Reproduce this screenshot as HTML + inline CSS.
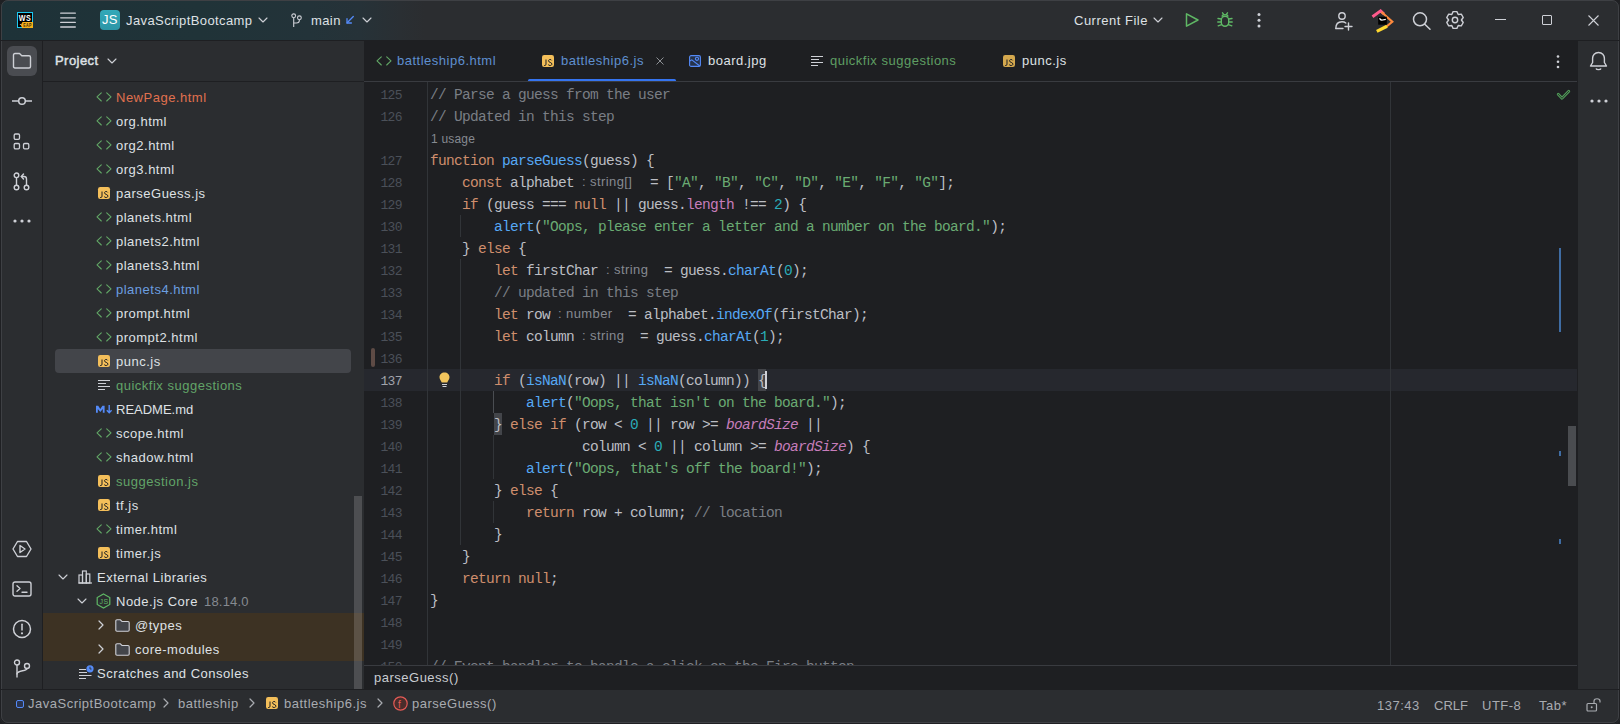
<!DOCTYPE html><html><head><meta charset="utf-8"><style>
*{margin:0;padding:0;box-sizing:border-box}
html,body{width:1620px;height:724px;overflow:hidden;background:#1F2023}
body{font-family:"Liberation Sans",sans-serif;font-size:13px;color:#DFE1E5;position:relative;letter-spacing:0.5px}
.a{position:absolute}
svg{position:absolute;overflow:visible}
#win{position:absolute;left:0;top:0;width:1620px;height:724px;background:#2B2D30;overflow:hidden;border-radius:7px;}
#frame{position:absolute;left:1px;top:0;width:1618px;height:723px;border:1px solid #3E4044;border-radius:7px;pointer-events:none;box-shadow:0 0 0 1px #1F2023}
#title{left:0;top:0;width:1620px;height:40px;background:linear-gradient(90deg,#1E3238 0px,#203338 200px,#233339 310px,#263238 360px,#2A2F33 400px,#2B2D30 425px)}
#lstrip{left:0;top:40px;width:43px;height:650px;background:#2B2D30;border-right:1px solid #1E1F22}
#proj{left:43px;top:40px;width:321px;height:650px;background:#2B2D30;overflow:hidden}
#editor{left:364px;top:40px;width:1213px;height:650px;background:#1E1F22;overflow:hidden}
#rstrip{left:1577px;top:40px;width:43px;height:650px;background:#2B2D30;border-left:1px solid #1E1F22}
#status{left:0;top:690px;width:1620px;height:34px;background:#2B2D30}
.t{position:absolute;white-space:nowrap;line-height:16px}
.code{position:absolute;font-family:"Liberation Mono",monospace;font-size:14.5px;white-space:pre;line-height:22px;color:#BCBEC4;letter-spacing:-0.7px}
.ln{position:absolute;left:0;width:37px;text-align:right;font-family:"Liberation Mono",monospace;font-size:12.5px;color:#4B5059;line-height:22px;letter-spacing:0}
.kw{color:#CF8E6D}.str{color:#6AAB73}.num{color:#2AACB8}.fn{color:#56A8F5}.cm{color:#7A7E85}.prop{color:#C77DBB}.gl{color:#C77DBB;font-style:italic}
.hint{display:inline-block;position:relative;height:16px;vertical-align:top;}
.hint span{position:absolute;left:8px;top:-1px;font-family:"Liberation Sans",sans-serif;font-size:13px;color:#868A91;letter-spacing:0.4px}
</style></head><body><div id="win">
<div class="a" id="title">
<svg style="left:16px;top:11px" width="18" height="18" viewBox="0 0 18 18">
<rect x="1.5" y="1.5" width="15" height="15" fill="#000" stroke="#1CC8F0" stroke-width="1"/>
<text x="2.7" y="9.8" font-family="Liberation Sans" font-weight="bold" font-size="8.6" fill="#fff" textLength="12.4" lengthAdjust="spacingAndGlyphs">WS</text>
<path d="M6.5 11 H17 V17 H6.2 L4.8 14 Z" fill="#F5B01A"/>
<circle cx="4.3" cy="13.6" r="0.5" fill="#fff"/>
<text x="7.3" y="15.8" font-family="Liberation Sans" font-weight="bold" font-size="5" fill="#3a2a10" textLength="8.5" lengthAdjust="spacingAndGlyphs">EAP</text>
</svg>
<svg style="left:60px;top:12px" width="16" height="16" viewBox="0 0 16 16">
<g stroke="#CED0D6" stroke-width="1.3" stroke-linecap="round"><line x1="0.7" y1="1.2" x2="15.3" y2="1.2"/><line x1="0.7" y1="5.8" x2="15.3" y2="5.8"/><line x1="0.7" y1="10.4" x2="15.3" y2="10.4"/><line x1="0.7" y1="15" x2="15.3" y2="15"/></g></svg>
<div class="a" style="left:100px;top:10px;width:20px;height:20px;border-radius:4px;background:linear-gradient(#33A9B9,#2B95A6)"></div>
<div class="t" style="left:102px;top:12px;font-size:13px;color:#fff;letter-spacing:0.2px">JS</div>
<div class="t" style="left:126px;top:13px;letter-spacing:0.4px">JavaScriptBootcamp</div>
<svg style="left:258px;top:17px" width="10" height="6" viewBox="0 0 10 6"><path d="M1 1 L5 5 L9 1" fill="none" stroke="#CED0D6" stroke-width="1.1" stroke-linecap="round" stroke-linejoin="round"/></svg>
<svg style="left:289px;top:13px" width="14" height="15" viewBox="0 0 14 15">
<g fill="none" stroke="#CED0D6" stroke-width="1.1"><circle cx="4.7" cy="2.8" r="1.9"/><circle cx="10.4" cy="4.8" r="1.9"/><path d="M4.7 4.7 V14"/><path d="M10.4 6.7 Q10.4 10 7.5 10 H4.7"/></g></svg>
<div class="t" style="left:311px;top:13px;letter-spacing:0.4px">main</div>
<svg style="left:345px;top:15px" width="10" height="10" viewBox="0 0 10 10"><g fill="none" stroke="#548AF7" stroke-width="1.3" stroke-linecap="round"><path d="M8.3 1.5 L2.2 7.8"/><path d="M2 3.6 V8 H6.4"/></g></svg>
<svg style="left:362px;top:17px" width="10" height="6" viewBox="0 0 10 6"><path d="M1 1 L5 5 L9 1" fill="none" stroke="#CED0D6" stroke-width="1.1" stroke-linecap="round" stroke-linejoin="round"/></svg>
<div class="t" style="left:1074px;top:13px;letter-spacing:0.5px">Current File</div>
<svg style="left:1153px;top:17px" width="10" height="6" viewBox="0 0 10 6"><path d="M1 1 L5 5 L9 1" fill="none" stroke="#CED0D6" stroke-width="1.1" stroke-linecap="round" stroke-linejoin="round"/></svg>
<svg style="left:1184px;top:12px" width="16" height="16" viewBox="0 0 16 16"><path d="M2.5 1.8 L14 8 L2.5 14.2 Z" fill="none" stroke="#5FB865" stroke-width="1.5" stroke-linejoin="round"/></svg>
<svg style="left:1217px;top:12px" width="16" height="16" viewBox="0 0 16 16"><g fill="none" stroke="#5FB865" stroke-width="1.4" stroke-linecap="round">
<path d="M5.2 4.3 C5.2 2 10.8 2 10.8 4.3"/><path d="M6.5 2.2 L5.5 0.8 M9.5 2.2 L10.5 0.8"/>
<rect x="4.3" y="4.3" width="7.4" height="10" rx="3.7"/><path d="M1 6.5 L4.3 7 M15 6.5 L11.7 7 M0.8 10 H4.3 M15.2 10 H11.7 M1.2 13.8 L4.6 12.6 M14.8 13.8 L11.4 12.6"/></g></svg>
<svg style="left:1257px;top:12px" width="4" height="16" viewBox="0 0 4 16"><g fill="#CED0D6"><circle cx="2" cy="2.5" r="1.5"/><circle cx="2" cy="8.3" r="1.5"/><circle cx="2" cy="14" r="1.5"/></g></svg>
<svg style="left:1334px;top:11px" width="20" height="20" viewBox="0 0 20 20"><g fill="none" stroke="#CED0D6" stroke-width="1.4" stroke-linecap="round">
<circle cx="8" cy="5" r="3.2"/><path d="M1.8 17.5 C1.8 12.5 5 10.8 8 10.8 C9.5 10.8 10.8 11.2 11.8 12"/><path d="M2 17.5 H9"/><path d="M14.5 12 V19 M11 15.5 H18"/></g></svg>
<svg style="left:1366px;top:5px" width="34" height="32" viewBox="0 0 34 32">
<path d="M6.5 11.8 L14.6 5.9 L18 9" fill="none" stroke="#FF5A8C" stroke-width="3" stroke-linejoin="miter"/>
<path d="M15.5 7 L26.3 16.8 L20 22" fill="none" stroke="#FF8A3D" stroke-width="2.2" stroke-linejoin="miter"/>
<path d="M21 21.2 L10.8 26.4" fill="none" stroke="#FFD82E" stroke-width="3.2"/>
<rect x="12.2" y="11.7" width="8.6" height="8" fill="#000"/>
<path d="M13.6 13.3 Q14.3 15.4 16.6 15 L19.8 14.3" fill="none" stroke="#fff" stroke-width="1.2"/>
</svg>
<svg style="left:1412px;top:11px" width="20" height="20" viewBox="0 0 20 20"><g fill="none" stroke="#CED0D6" stroke-width="1.5" stroke-linecap="round"><circle cx="8" cy="8.3" r="6.5"/><path d="M12.8 13.2 L18 18.3"/></g></svg>
<svg style="left:1445px;top:10px" width="20" height="20" viewBox="0 0 20 20"><g fill="none" stroke="#CED0D6" stroke-width="1.4" stroke-linejoin="round"><path d="M6.80 4.46 L8.07 1.62 L11.93 1.62 L13.20 4.46 L16.29 4.13 L18.22 7.49 L16.40 10.00 L18.22 12.51 L16.29 15.87 L13.20 15.54 L11.93 18.38 L8.07 18.38 L6.80 15.54 L3.71 15.87 L1.78 12.51 L3.60 10.00 L1.78 7.49 L3.71 4.13Z"/><circle cx="10" cy="10" r="2.7"/></g></svg>
<div class="a" style="left:1495px;top:19px;width:11px;height:1px;background:#CED0D6"></div>
<div class="a" style="left:1542px;top:15px;width:10px;height:10px;border:1px solid #CED0D6;border-radius:1px"></div>
<svg style="left:1588px;top:15px" width="11" height="11" viewBox="0 0 11 11"><g stroke="#CED0D6" stroke-width="1.1"><path d="M0.5 0.5 L10.5 10.5 M10.5 0.5 L0.5 10.5"/></g></svg>
</div>
<div class="a" style="left:0;top:40px;width:1620px;height:1px;background:#1E1F22;z-index:2"></div>
<div class="a" id="lstrip">
<div class="a" style="left:7px;top:6px;width:30px;height:30px;border-radius:6px;background:#4A4C51"></div>
<svg style="left:12px;top:12px" width="20" height="18" viewBox="0 0 20 18"><path d="M1.5 3 Q1.5 1.5 3 1.5 H7.5 L9.8 3.8 H17 Q18.5 3.8 18.5 5.3 V14.5 Q18.5 16 17 16 H3 Q1.5 16 1.5 14.5 Z" fill="none" stroke="#CED0D6" stroke-width="1.4" stroke-linejoin="round"/></svg>
<svg style="left:11px;top:54px" width="22" height="14" viewBox="0 0 22 14"><g fill="none" stroke="#CED0D6" stroke-width="1.5"><circle cx="11" cy="7" r="3.3"/><path d="M1 7 H7.7 M14.3 7 H21"/></g></svg>
<svg style="left:13px;top:93px" width="18" height="18" viewBox="0 0 18 18"><g fill="none" stroke="#CED0D6" stroke-width="1.3"><rect x="1.2" y="1" width="5.3" height="5.3" rx="1.2"/><rect x="1.2" y="10.5" width="5.3" height="5.3" rx="1.2"/><rect x="10.5" y="10.5" width="5.3" height="5.3" rx="1.2"/></g></svg>
<svg style="left:13px;top:132px" width="18" height="19" viewBox="0 0 18 19"><g fill="none" stroke="#CED0D6" stroke-width="1.4" stroke-linecap="round"><circle cx="3.5" cy="3.3" r="2.3"/><circle cx="3.5" cy="15.5" r="2.3"/><circle cx="13.5" cy="15.5" r="2.3"/><path d="M3.5 5.6 V13.2"/><path d="M13.5 13.2 V7 Q13.5 4.5 11 4.5 H8.5"/><path d="M10.5 2 L8.3 4.5 L10.5 7"/></g></svg>
<svg style="left:13px;top:179px" width="18" height="4" viewBox="0 0 18 4"><g fill="#CED0D6"><circle cx="2" cy="2" r="1.6"/><circle cx="9" cy="2" r="1.6"/><circle cx="16" cy="2" r="1.6"/></g></svg>
<svg style="left:12px;top:500px" width="20" height="18" viewBox="0 0 20 18"><g fill="none" stroke="#CED0D6" stroke-width="1.4" stroke-linejoin="round"><path d="M5.5 1.5 H14.5 L19 9 L14.5 16.5 H5.5 L1 9 Z"/><path d="M8 5.5 L13 9 L8 12.5 Z"/></g></svg>
<svg style="left:12px;top:541px" width="20" height="16" viewBox="0 0 20 16"><g fill="none" stroke="#CED0D6" stroke-width="1.4" stroke-linecap="round" stroke-linejoin="round"><rect x="1" y="1" width="18" height="14" rx="2"/><path d="M5 4.8 L8 7.5 L5 10.2"/><path d="M10 11.2 H15"/></g></svg>
<svg style="left:12px;top:579px" width="20" height="20" viewBox="0 0 20 20"><g fill="none" stroke="#CED0D6" stroke-width="1.5" stroke-linecap="round"><circle cx="10" cy="10" r="8.5"/><path d="M10 5.3 V11"/></g><circle cx="10" cy="14.3" r="1.1" fill="#CED0D6"/></svg>
<svg style="left:13px;top:619px" width="18" height="19" viewBox="0 0 18 19"><g fill="none" stroke="#CED0D6" stroke-width="1.4" stroke-linecap="round"><circle cx="4" cy="3.5" r="2.5"/><circle cx="14" cy="7" r="2.5"/><path d="M4 6 V18"/><path d="M4 15 C4 11 14 12.5 14 9.5"/></g></svg>
</div>
<div class="a" id="proj">
<div class="t" style="left:12px;top:13px;letter-spacing:0.45px;-webkit-text-stroke:0.45px #DFE1E5">Project</div>
<svg style="left:64px;top:18px" width="10" height="6" viewBox="0 0 10 6"><path d="M1 1 L5 5 L9 1" fill="none" stroke="#CED0D6" stroke-width="1.1" stroke-linecap="round" stroke-linejoin="round"/></svg>
<div class="a" style="left:0;top:41px;width:321px;height:1px;background:#1E1F22"></div>
<svg style="left:53px;top:52px" width="16" height="10" viewBox="0 0 16 10"><path d="M5.3 0.8 L1 4.9 L5.3 9 M10.7 0.8 L15 4.9 L10.7 9" fill="none" stroke="#62A766" stroke-width="1.1" stroke-linejoin="round" stroke-linecap="round"/></svg>
<div class="t" style="left:73px;top:50px;color:#E0714F;">NewPage.html</div>
<svg style="left:53px;top:76px" width="16" height="10" viewBox="0 0 16 10"><path d="M5.3 0.8 L1 4.9 L5.3 9 M10.7 0.8 L15 4.9 L10.7 9" fill="none" stroke="#62A766" stroke-width="1.1" stroke-linejoin="round" stroke-linecap="round"/></svg>
<div class="t" style="left:73px;top:74px;">org.html</div>
<svg style="left:53px;top:100px" width="16" height="10" viewBox="0 0 16 10"><path d="M5.3 0.8 L1 4.9 L5.3 9 M10.7 0.8 L15 4.9 L10.7 9" fill="none" stroke="#62A766" stroke-width="1.1" stroke-linejoin="round" stroke-linecap="round"/></svg>
<div class="t" style="left:73px;top:98px;">org2.html</div>
<svg style="left:53px;top:124px" width="16" height="10" viewBox="0 0 16 10"><path d="M5.3 0.8 L1 4.9 L5.3 9 M10.7 0.8 L15 4.9 L10.7 9" fill="none" stroke="#62A766" stroke-width="1.1" stroke-linejoin="round" stroke-linecap="round"/></svg>
<div class="t" style="left:73px;top:122px;">org3.html</div>
<svg style="left:55px;top:147px" width="12" height="12" viewBox="0 0 12 12"><rect x="0" y="0" width="12" height="12" rx="2.2" fill="#F4BF5A"/><g fill="none" stroke="#1E1F22" stroke-width="1" transform="translate(0.1 0.5)"><path d="M3.9 4 V8.7 Q3.9 10 2.7 10 H1.9"/><path d="M9.6 4.9 C9.3 4.3 8.7 4 8 4 C7 4 6.4 4.6 6.4 5.4 C6.4 7.1 9.8 6.6 9.8 8.5 C9.8 9.5 9 10 8 10 C7.2 10 6.5 9.7 6.1 9.1"/></g></svg>
<div class="t" style="left:73px;top:146px;">parseGuess.js</div>
<svg style="left:53px;top:172px" width="16" height="10" viewBox="0 0 16 10"><path d="M5.3 0.8 L1 4.9 L5.3 9 M10.7 0.8 L15 4.9 L10.7 9" fill="none" stroke="#62A766" stroke-width="1.1" stroke-linejoin="round" stroke-linecap="round"/></svg>
<div class="t" style="left:73px;top:170px;">planets.html</div>
<svg style="left:53px;top:196px" width="16" height="10" viewBox="0 0 16 10"><path d="M5.3 0.8 L1 4.9 L5.3 9 M10.7 0.8 L15 4.9 L10.7 9" fill="none" stroke="#62A766" stroke-width="1.1" stroke-linejoin="round" stroke-linecap="round"/></svg>
<div class="t" style="left:73px;top:194px;">planets2.html</div>
<svg style="left:53px;top:220px" width="16" height="10" viewBox="0 0 16 10"><path d="M5.3 0.8 L1 4.9 L5.3 9 M10.7 0.8 L15 4.9 L10.7 9" fill="none" stroke="#62A766" stroke-width="1.1" stroke-linejoin="round" stroke-linecap="round"/></svg>
<div class="t" style="left:73px;top:218px;">planets3.html</div>
<svg style="left:53px;top:244px" width="16" height="10" viewBox="0 0 16 10"><path d="M5.3 0.8 L1 4.9 L5.3 9 M10.7 0.8 L15 4.9 L10.7 9" fill="none" stroke="#62A766" stroke-width="1.1" stroke-linejoin="round" stroke-linecap="round"/></svg>
<div class="t" style="left:73px;top:242px;color:#6C9FE0;">planets4.html</div>
<svg style="left:53px;top:268px" width="16" height="10" viewBox="0 0 16 10"><path d="M5.3 0.8 L1 4.9 L5.3 9 M10.7 0.8 L15 4.9 L10.7 9" fill="none" stroke="#62A766" stroke-width="1.1" stroke-linejoin="round" stroke-linecap="round"/></svg>
<div class="t" style="left:73px;top:266px;">prompt.html</div>
<svg style="left:53px;top:292px" width="16" height="10" viewBox="0 0 16 10"><path d="M5.3 0.8 L1 4.9 L5.3 9 M10.7 0.8 L15 4.9 L10.7 9" fill="none" stroke="#62A766" stroke-width="1.1" stroke-linejoin="round" stroke-linecap="round"/></svg>
<div class="t" style="left:73px;top:290px;">prompt2.html</div>
<div class="a" style="left:12px;top:309px;width:296px;height:24px;border-radius:4px;background:#43454A"></div>
<svg style="left:55px;top:315px" width="12" height="12" viewBox="0 0 12 12"><rect x="0" y="0" width="12" height="12" rx="2.2" fill="#F4BF5A"/><g fill="none" stroke="#1E1F22" stroke-width="1" transform="translate(0.1 0.5)"><path d="M3.9 4 V8.7 Q3.9 10 2.7 10 H1.9"/><path d="M9.6 4.9 C9.3 4.3 8.7 4 8 4 C7 4 6.4 4.6 6.4 5.4 C6.4 7.1 9.8 6.6 9.8 8.5 C9.8 9.5 9 10 8 10 C7.2 10 6.5 9.7 6.1 9.1"/></g></svg>
<div class="t" style="left:73px;top:314px;">punc.js</div>
<svg style="left:54px;top:339px" width="14" height="12" viewBox="0 0 14 12"><g stroke="#CED0D6" stroke-width="1.2"><path d="M1 1.5 H13 M1 4.5 H9 M1 7.5 H13 M1 10.5 H8"/></g></svg>
<div class="t" style="left:73px;top:338px;color:#62A468;">quickfix suggestions</div>
<svg style="left:52px;top:363px" width="18" height="12" viewBox="0 0 18 12"><path d="M1 9.8 V2.8 H3.2 L5.3 5.9 L7.4 2.8 H9.6 V9.8 H7.8 V5.9 L5.3 9 L2.8 5.9 V9.8 Z" fill="#548AF7"/><path d="M14.2 2 V9.5 M11.8 7.3 L14.2 9.8 L16.6 7.3" fill="none" stroke="#548AF7" stroke-width="1.4"/></svg>
<div class="t" style="left:73px;top:362px;letter-spacing:0;">README.md</div>
<svg style="left:53px;top:388px" width="16" height="10" viewBox="0 0 16 10"><path d="M5.3 0.8 L1 4.9 L5.3 9 M10.7 0.8 L15 4.9 L10.7 9" fill="none" stroke="#62A766" stroke-width="1.1" stroke-linejoin="round" stroke-linecap="round"/></svg>
<div class="t" style="left:73px;top:386px;">scope.html</div>
<svg style="left:53px;top:412px" width="16" height="10" viewBox="0 0 16 10"><path d="M5.3 0.8 L1 4.9 L5.3 9 M10.7 0.8 L15 4.9 L10.7 9" fill="none" stroke="#62A766" stroke-width="1.1" stroke-linejoin="round" stroke-linecap="round"/></svg>
<div class="t" style="left:73px;top:410px;">shadow.html</div>
<svg style="left:55px;top:435px" width="12" height="12" viewBox="0 0 12 12"><rect x="0" y="0" width="12" height="12" rx="2.2" fill="#F4BF5A"/><g fill="none" stroke="#1E1F22" stroke-width="1" transform="translate(0.1 0.5)"><path d="M3.9 4 V8.7 Q3.9 10 2.7 10 H1.9"/><path d="M9.6 4.9 C9.3 4.3 8.7 4 8 4 C7 4 6.4 4.6 6.4 5.4 C6.4 7.1 9.8 6.6 9.8 8.5 C9.8 9.5 9 10 8 10 C7.2 10 6.5 9.7 6.1 9.1"/></g></svg>
<div class="t" style="left:73px;top:434px;color:#62A468;">suggestion.js</div>
<svg style="left:55px;top:459px" width="12" height="12" viewBox="0 0 12 12"><rect x="0" y="0" width="12" height="12" rx="2.2" fill="#F4BF5A"/><g fill="none" stroke="#1E1F22" stroke-width="1" transform="translate(0.1 0.5)"><path d="M3.9 4 V8.7 Q3.9 10 2.7 10 H1.9"/><path d="M9.6 4.9 C9.3 4.3 8.7 4 8 4 C7 4 6.4 4.6 6.4 5.4 C6.4 7.1 9.8 6.6 9.8 8.5 C9.8 9.5 9 10 8 10 C7.2 10 6.5 9.7 6.1 9.1"/></g></svg>
<div class="t" style="left:73px;top:458px;">tf.js</div>
<svg style="left:53px;top:484px" width="16" height="10" viewBox="0 0 16 10"><path d="M5.3 0.8 L1 4.9 L5.3 9 M10.7 0.8 L15 4.9 L10.7 9" fill="none" stroke="#62A766" stroke-width="1.1" stroke-linejoin="round" stroke-linecap="round"/></svg>
<div class="t" style="left:73px;top:482px;">timer.html</div>
<svg style="left:55px;top:507px" width="12" height="12" viewBox="0 0 12 12"><rect x="0" y="0" width="12" height="12" rx="2.2" fill="#F4BF5A"/><g fill="none" stroke="#1E1F22" stroke-width="1" transform="translate(0.1 0.5)"><path d="M3.9 4 V8.7 Q3.9 10 2.7 10 H1.9"/><path d="M9.6 4.9 C9.3 4.3 8.7 4 8 4 C7 4 6.4 4.6 6.4 5.4 C6.4 7.1 9.8 6.6 9.8 8.5 C9.8 9.5 9 10 8 10 C7.2 10 6.5 9.7 6.1 9.1"/></g></svg>
<div class="t" style="left:73px;top:506px;">timer.js</div>
<div class="a" style="left:0;top:573px;width:321px;height:48px;background:#3D3223"></div>
<svg style="left:15px;top:534px" width="10" height="6" viewBox="0 0 10 6"><path d="M1 1 L5 5 L9 1" fill="none" stroke="#CED0D6" stroke-width="1.1" stroke-linecap="round" stroke-linejoin="round"/></svg>
<svg style="left:35px;top:530px" width="15" height="14" viewBox="0 0 15 14"><g fill="none" stroke="#CED0D6" stroke-width="1.2"><rect x="1" y="5" width="3.5" height="8"/><rect x="4.5" y="1" width="3.8" height="12"/><rect x="8.3" y="4" width="3.5" height="9"/><path d="M0.5 13 H14"/></g></svg>
<div class="t" style="left:54px;top:530px">External Libraries</div>
<svg style="left:34px;top:558px" width="10" height="6" viewBox="0 0 10 6"><path d="M1 1 L5 5 L9 1" fill="none" stroke="#CED0D6" stroke-width="1.1" stroke-linecap="round" stroke-linejoin="round"/></svg>
<svg style="left:53px;top:553px" width="15" height="16" viewBox="0 0 15 16"><path d="M7.5 1 L13.8 4.5 V11.5 L7.5 15 L1.2 11.5 V4.5 Z" fill="none" stroke="#5FB865" stroke-width="1.2"/><text x="3.6" y="11" font-family="Liberation Sans" font-size="7" fill="#5FB865">JS</text></svg>
<div class="t" style="left:73px;top:554px">Node.js Core <span style="color:#868A91;margin-left:2px;letter-spacing:0.2px">18.14.0</span></div>
<svg style="left:55px;top:580px" width="6" height="10" viewBox="0 0 6 10"><path d="M1 1 L5 5 L1 9" fill="none" stroke="#CED0D6" stroke-width="1.2" stroke-linecap="round" stroke-linejoin="round"/></svg>
<svg style="left:72px;top:579px" width="15" height="13" viewBox="0 0 15 13"><path d="M0.8 2 Q0.8 0.8 2 0.8 H5.3 L7 2.5 H13 Q14.2 2.5 14.2 3.7 V11 Q14.2 12.2 13 12.2 H2 Q0.8 12.2 0.8 11 Z" fill="#43454A" stroke="#CED0D6" stroke-width="1.1"/></svg>
<div class="t" style="left:92px;top:578px">@types</div>
<svg style="left:55px;top:604px" width="6" height="10" viewBox="0 0 6 10"><path d="M1 1 L5 5 L1 9" fill="none" stroke="#CED0D6" stroke-width="1.2" stroke-linecap="round" stroke-linejoin="round"/></svg>
<svg style="left:72px;top:603px" width="15" height="13" viewBox="0 0 15 13"><path d="M0.8 2 Q0.8 0.8 2 0.8 H5.3 L7 2.5 H13 Q14.2 2.5 14.2 3.7 V11 Q14.2 12.2 13 12.2 H2 Q0.8 12.2 0.8 11 Z" fill="#43454A" stroke="#CED0D6" stroke-width="1.1"/></svg>
<div class="t" style="left:92px;top:602px">core-modules</div>
<svg style="left:35px;top:625px" width="16" height="16" viewBox="0 0 16 16"><g stroke="#CED0D6" stroke-width="1"><path d="M1 4.5 H8 M1 7.5 H9 M1 10.5 H13.5 M1 13.5 H8"/></g><circle cx="12" cy="3.8" r="3.6" fill="#548AF7"/><path d="M12 1.8 V4 H13.6" stroke="#2B2D30" stroke-width="0.9" fill="none"/></svg>
<div class="t" style="left:54px;top:626px">Scratches and Consoles</div>
<div class="a" style="left:311px;top:456px;width:8px;height:193px;border-radius:0;background:rgba(255,255,255,0.16)"></div>
</div>
<div class="a" id="editor">
<svg style="left:12px;top:16px" width="16" height="10" viewBox="0 0 16 10"><path d="M5.3 0.8 L1 4.9 L5.3 9 M10.7 0.8 L15 4.9 L10.7 9" fill="none" stroke="#62A766" stroke-width="1.1" stroke-linejoin="round" stroke-linecap="round"/></svg>
<div class="t" style="left:33px;top:13px;color:#5E8FD0">battleship6.html</div>
<svg style="left:178px;top:15px" width="12" height="12" viewBox="0 0 12 12"><rect x="0" y="0" width="12" height="12" rx="2.2" fill="#F4BF5A"/><g fill="none" stroke="#1E1F22" stroke-width="1" transform="translate(0.1 0.5)"><path d="M3.9 4 V8.7 Q3.9 10 2.7 10 H1.9"/><path d="M9.6 4.9 C9.3 4.3 8.7 4 8 4 C7 4 6.4 4.6 6.4 5.4 C6.4 7.1 9.8 6.6 9.8 8.5 C9.8 9.5 9 10 8 10 C7.2 10 6.5 9.7 6.1 9.1"/></g></svg>
<div class="t" style="left:197px;top:13px;color:#5E8FD0">battleship6.js</div>
<svg style="left:292px;top:17px" width="8" height="8" viewBox="0 0 8 8"><path d="M0.5 0.5 L7.5 7.5 M7.5 0.5 L0.5 7.5" stroke="#8C8F94" stroke-width="1"/></svg>
<div class="a" style="left:164px;top:39px;width:148px;height:3px;border-radius:1.5px;background:#3574F0"></div>
<svg style="left:325px;top:15px" width="12" height="12" viewBox="0 0 12 12"><rect x="0.6" y="0.6" width="10.8" height="10.8" rx="1.5" fill="#25324A" stroke="#548AF7" stroke-width="1.1"/><g fill="none" stroke="#548AF7" stroke-width="1.1"><circle cx="8" cy="3.8" r="1.6"/><path d="M0.8 6 L2.8 4.8 L10.8 11"/></g></svg>
<div class="t" style="left:344px;top:13px;color:#DFE1E5">board.jpg</div>
<svg style="left:446px;top:15px" width="14" height="12" viewBox="0 0 14 12"><g stroke="#CED0D6" stroke-width="1.2"><path d="M1 1.5 H13 M1 4.5 H9 M1 7.5 H13 M1 10.5 H8"/></g></svg>
<div class="t" style="left:466px;top:13px;color:#5F9E63">quickfix suggestions</div>
<svg style="left:639px;top:15px" width="12" height="12" viewBox="0 0 12 12"><rect x="0" y="0" width="12" height="12" rx="2.2" fill="#D4A84E"/><g fill="none" stroke="#1E1F22" stroke-width="1" transform="translate(0.1 0.5)"><path d="M3.9 4 V8.7 Q3.9 10 2.7 10 H1.9"/><path d="M9.6 4.9 C9.3 4.3 8.7 4 8 4 C7 4 6.4 4.6 6.4 5.4 C6.4 7.1 9.8 6.6 9.8 8.5 C9.8 9.5 9 10 8 10 C7.2 10 6.5 9.7 6.1 9.1"/></g></svg>
<div class="t" style="left:658px;top:13px;color:#DFE1E5">punc.js</div>
<svg style="left:1192px;top:15px" width="4" height="14" viewBox="0 0 4 14"><g fill="#CED0D6"><circle cx="2" cy="1.5" r="1.3"/><circle cx="2" cy="6.8" r="1.3"/><circle cx="2" cy="12" r="1.3"/></g></svg>
<div class="a" style="left:0;top:41px;width:1213px;height:1px;background:#393B40"></div>
<div class="a" style="left:0;top:329px;width:1213px;height:22px;background:#26282E"></div>
<div class="a" style="left:63px;top:42px;width:1px;height:583px;background:#313438"></div>
<div class="a" style="left:1026px;top:42px;width:1px;height:583px;background:#313438"></div>
<div class="a" style="left:7px;top:308px;width:4px;height:19px;border-radius:2px;background:#5E4B45"></div>
<div class="a" style="left:96px;top:175px;width:1px;height:22px;background:#313438"></div>
<div class="a" style="left:96px;top:219px;width:1px;height:286px;background:#313438"></div>
<div class="a" style="left:129px;top:351px;width:1px;height:22px;background:#4A4D52"></div>
<div class="a" style="left:129px;top:395px;width:1px;height:44px;background:#313438"></div>
<div class="a" style="left:129px;top:461px;width:1px;height:22px;background:#313438"></div>
<div class="a" style="left:394px;top:329px;width:8px;height:22px;background:#43454A"></div>
<div class="a" style="left:130px;top:373px;width:8px;height:22px;background:#43454A"></div>
<div class="code" style="left:0px;width:38px;text-align:right;top:44.5px;color:#4B5059;font-size:13px;letter-spacing:-0.6px">125</div>
<div class="code" style="left:66px;top:44px"><span class="cm">// Parse a guess from the user</span></div>
<div class="code" style="left:0px;width:38px;text-align:right;top:66.5px;color:#4B5059;font-size:13px;letter-spacing:-0.6px">126</div>
<div class="code" style="left:66px;top:66px"><span class="cm">// Updated in this step</span></div>
<div class="t" style="left:67px;top:91px;font-size:12px;color:#868A91;letter-spacing:0.2px">1 usage</div>
<div class="code" style="left:0px;width:38px;text-align:right;top:110.5px;color:#4B5059;font-size:13px;letter-spacing:-0.6px">127</div>
<div class="code" style="left:66px;top:110px"><span class="kw">function </span><span class="fn">parseGuess</span>(guess) {</div>
<div class="code" style="left:0px;width:38px;text-align:right;top:132.5px;color:#4B5059;font-size:13px;letter-spacing:-0.6px">128</div>
<div class="code" style="left:66px;top:132px">    <span class="kw">const </span>alphabet<span class="hint" style="width:68px"><span>: string[]</span></span> = [<span class="str">"A"</span>, <span class="str">"B"</span>, <span class="str">"C"</span>, <span class="str">"D"</span>, <span class="str">"E"</span>, <span class="str">"F"</span>, <span class="str">"G"</span>];</div>
<div class="code" style="left:0px;width:38px;text-align:right;top:154.5px;color:#4B5059;font-size:13px;letter-spacing:-0.6px">129</div>
<div class="code" style="left:66px;top:154px">    <span class="kw">if </span>(guess === <span class="kw">null</span> || guess.<span class="prop">length</span> !== <span class="num">2</span>) {</div>
<div class="code" style="left:0px;width:38px;text-align:right;top:176.5px;color:#4B5059;font-size:13px;letter-spacing:-0.6px">130</div>
<div class="code" style="left:66px;top:176px">        <span class="fn">alert</span>(<span class="str">"Oops, please enter a letter and a number on the board."</span>);</div>
<div class="code" style="left:0px;width:38px;text-align:right;top:198.5px;color:#4B5059;font-size:13px;letter-spacing:-0.6px">131</div>
<div class="code" style="left:66px;top:198px">    } <span class="kw">else</span> {</div>
<div class="code" style="left:0px;width:38px;text-align:right;top:220.5px;color:#4B5059;font-size:13px;letter-spacing:-0.6px">132</div>
<div class="code" style="left:66px;top:220px">        <span class="kw">let </span>firstChar<span class="hint" style="width:58px"><span>: string</span></span> = guess.<span class="fn">charAt</span>(<span class="num">0</span>);</div>
<div class="code" style="left:0px;width:38px;text-align:right;top:242.5px;color:#4B5059;font-size:13px;letter-spacing:-0.6px">133</div>
<div class="code" style="left:66px;top:242px">        <span class="cm">// updated in this step</span></div>
<div class="code" style="left:0px;width:38px;text-align:right;top:264.5px;color:#4B5059;font-size:13px;letter-spacing:-0.6px">134</div>
<div class="code" style="left:66px;top:264px">        <span class="kw">let </span>row<span class="hint" style="width:70px"><span>: number</span></span> = alphabet.<span class="fn">indexOf</span>(firstChar);</div>
<div class="code" style="left:0px;width:38px;text-align:right;top:286.5px;color:#4B5059;font-size:13px;letter-spacing:-0.6px">135</div>
<div class="code" style="left:66px;top:286px">        <span class="kw">let </span>column<span class="hint" style="width:58px"><span>: string</span></span> = guess.<span class="fn">charAt</span>(<span class="num">1</span>);</div>
<div class="code" style="left:0px;width:38px;text-align:right;top:308.5px;color:#4B5059;font-size:13px;letter-spacing:-0.6px">136</div>
<div class="code" style="left:0px;width:38px;text-align:right;top:330.5px;color:#A1A3AB;font-size:13px;letter-spacing:-0.6px">137</div>
<div class="code" style="left:66px;top:330px">        <span class="kw">if </span>(<span class="fn">isNaN</span>(row) || <span class="fn">isNaN</span>(column)) {</div>
<div class="code" style="left:0px;width:38px;text-align:right;top:352.5px;color:#4B5059;font-size:13px;letter-spacing:-0.6px">138</div>
<div class="code" style="left:66px;top:352px">            <span class="fn">alert</span>(<span class="str">"Oops, that isn't on the board."</span>);</div>
<div class="code" style="left:0px;width:38px;text-align:right;top:374.5px;color:#4B5059;font-size:13px;letter-spacing:-0.6px">139</div>
<div class="code" style="left:66px;top:374px">        } <span class="kw">else if </span>(row &lt; <span class="num">0</span> || row &gt;= <span class="gl">boardSize</span> ||</div>
<div class="code" style="left:0px;width:38px;text-align:right;top:396.5px;color:#4B5059;font-size:13px;letter-spacing:-0.6px">140</div>
<div class="code" style="left:66px;top:396px">                   column &lt; <span class="num">0</span> || column &gt;= <span class="gl">boardSize</span>) {</div>
<div class="code" style="left:0px;width:38px;text-align:right;top:418.5px;color:#4B5059;font-size:13px;letter-spacing:-0.6px">141</div>
<div class="code" style="left:66px;top:418px">            <span class="fn">alert</span>(<span class="str">"Oops, that's off the board!"</span>);</div>
<div class="code" style="left:0px;width:38px;text-align:right;top:440.5px;color:#4B5059;font-size:13px;letter-spacing:-0.6px">142</div>
<div class="code" style="left:66px;top:440px">        } <span class="kw">else</span> {</div>
<div class="code" style="left:0px;width:38px;text-align:right;top:462.5px;color:#4B5059;font-size:13px;letter-spacing:-0.6px">143</div>
<div class="code" style="left:66px;top:462px">            <span class="kw">return </span>row + column; <span class="cm">// location</span></div>
<div class="code" style="left:0px;width:38px;text-align:right;top:484.5px;color:#4B5059;font-size:13px;letter-spacing:-0.6px">144</div>
<div class="code" style="left:66px;top:484px">        }</div>
<div class="code" style="left:0px;width:38px;text-align:right;top:506.5px;color:#4B5059;font-size:13px;letter-spacing:-0.6px">145</div>
<div class="code" style="left:66px;top:506px">    }</div>
<div class="code" style="left:0px;width:38px;text-align:right;top:528.5px;color:#4B5059;font-size:13px;letter-spacing:-0.6px">146</div>
<div class="code" style="left:66px;top:528px">    <span class="kw">return null</span>;</div>
<div class="code" style="left:0px;width:38px;text-align:right;top:550.5px;color:#4B5059;font-size:13px;letter-spacing:-0.6px">147</div>
<div class="code" style="left:66px;top:550px">}</div>
<div class="code" style="left:0px;width:38px;text-align:right;top:572.5px;color:#4B5059;font-size:13px;letter-spacing:-0.6px">148</div>
<div class="code" style="left:0px;width:38px;text-align:right;top:594.5px;color:#4B5059;font-size:13px;letter-spacing:-0.6px">149</div>
<div class="code" style="left:0px;width:38px;text-align:right;top:616.5px;color:#4B5059;font-size:13px;letter-spacing:-0.6px">150</div>
<div class="code" style="left:66px;top:616px"><span class="cm">// Event handler to handle a click on the Fire button</span></div>
<div class="a" style="left:401px;top:331px;width:2px;height:18px;background:#CED0D6"></div>
<svg style="left:75px;top:332px" width="11" height="16" viewBox="0 0 11 16"><path d="M5.5 0.5 C8.5 0.5 10.5 2.6 10.5 5.3 C10.5 7.5 8.8 8.6 8.3 10.5 H2.7 C2.2 8.6 0.5 7.5 0.5 5.3 C0.5 2.6 2.5 0.5 5.5 0.5Z" fill="#F2C55C"/><path d="M3 12.5 H8 M3.5 14.5 H7.5" stroke="#CED0D6" stroke-width="1.1"/></svg>
<svg style="left:1192px;top:50px" width="14" height="11" viewBox="0 0 14 11"><path d="M2.2 4.3 L6 8.3 L12.8 1.2" fill="none" stroke="#4F9A57" stroke-width="2.8" stroke-linecap="round" stroke-linejoin="round"/><path d="M2.2 4.3 L6 8.3 L12.8 1.2" fill="none" stroke="#1E1F22" stroke-width="0.8" stroke-linecap="round"/></svg>
<div class="a" style="left:1195px;top:208px;width:2px;height:84px;background:#3F6CA3"></div>
<div class="a" style="left:1195px;top:411px;width:2px;height:5px;background:#3F6CA3"></div>
<div class="a" style="left:1195px;top:499px;width:2px;height:5px;background:#3F6CA3"></div>
<div class="a" style="left:1204px;top:386px;width:8px;height:60px;border-radius:0;background:#4A4C50"></div>
<div class="a" style="left:0;top:625px;width:1213px;height:25px;background:#1E1F22;border-top:1px solid #393B40"></div>
<div class="t" style="left:10px;top:630px;color:#C9CCD1">parseGuess()</div>
</div>
<div class="a" id="rstrip">
<svg style="left:11px;top:11px" width="19" height="20" viewBox="0 0 19 20"><g fill="none" stroke="#CED0D6" stroke-width="1.4" stroke-linejoin="round"><path d="M9.5 1.5 C5.8 1.5 3.6 4.3 3.6 7.5 V11.5 L1.5 15 H17.5 L15.4 11.5 V7.5 C15.4 4.3 13.2 1.5 9.5 1.5Z"/><path d="M7 17.5 C7.5 19 11.5 19 12 17.5"/></g></svg>
<svg style="left:12px;top:59px" width="18" height="4" viewBox="0 0 18 4"><g fill="#CED0D6"><circle cx="2" cy="2" r="1.6"/><circle cx="9" cy="2" r="1.6"/><circle cx="16" cy="2" r="1.6"/></g></svg>
</div>
<div class="a" style="left:0;top:689px;width:1620px;height:1px;background:#1E1F22;z-index:2"></div>
<div class="a" id="status">
<div class="a" style="left:16px;top:10px;width:8px;height:8px;border:1.5px solid #548AF7;border-radius:2px;background:#2B3550"></div>
<div class="t" style="left:28px;top:6px;color:#A8ABB0">JavaScriptBootcamp</div>
<svg style="left:163px;top:8px" width="6" height="10" viewBox="0 0 6 10"><path d="M1 1 L5 5 L1 9" fill="none" stroke="#A8ABB0" stroke-width="1.2" stroke-linecap="round" stroke-linejoin="round"/></svg>
<div class="t" style="left:178px;top:6px;color:#A8ABB0">battleship</div>
<svg style="left:249px;top:8px" width="6" height="10" viewBox="0 0 6 10"><path d="M1 1 L5 5 L1 9" fill="none" stroke="#A8ABB0" stroke-width="1.2" stroke-linecap="round" stroke-linejoin="round"/></svg>
<svg style="left:266px;top:7px" width="12" height="12" viewBox="0 0 12 12"><rect x="0" y="0" width="12" height="12" rx="2.2" fill="#F4BF5A"/><g fill="none" stroke="#1E1F22" stroke-width="1" transform="translate(0.1 0.5)"><path d="M3.9 4 V8.7 Q3.9 10 2.7 10 H1.9"/><path d="M9.6 4.9 C9.3 4.3 8.7 4 8 4 C7 4 6.4 4.6 6.4 5.4 C6.4 7.1 9.8 6.6 9.8 8.5 C9.8 9.5 9 10 8 10 C7.2 10 6.5 9.7 6.1 9.1"/></g></svg>
<div class="t" style="left:284px;top:6px;color:#A8ABB0">battleship6.js</div>
<svg style="left:377px;top:8px" width="6" height="10" viewBox="0 0 6 10"><path d="M1 1 L5 5 L1 9" fill="none" stroke="#A8ABB0" stroke-width="1.2" stroke-linecap="round" stroke-linejoin="round"/></svg>
<svg style="left:393px;top:6px" width="15" height="15" viewBox="0 0 15 15"><circle cx="7.5" cy="7.5" r="6.7" fill="#4A2D2B" stroke="#E55B56" stroke-width="1.2"/><text x="5" y="11.5" font-family="Liberation Sans" font-size="10" fill="#E55B56">f</text></svg>
<div class="t" style="left:412px;top:6px;color:#A8ABB0">parseGuess()</div>
<div class="t" style="left:1377px;top:8px;color:#A8ABB0">137:43</div>
<div class="t" style="left:1434px;top:8px;color:#A8ABB0;letter-spacing:0">CRLF</div>
<div class="t" style="left:1482px;top:8px;color:#A8ABB0">UTF-8</div>
<div class="t" style="left:1539px;top:8px;color:#A8ABB0">Tab*</div>
<svg style="left:1586px;top:7px" width="16" height="15" viewBox="0 0 16 15"><g fill="none" stroke="#A8ABB0" stroke-width="1.2"><rect x="1" y="6.5" width="9.5" height="7.5" rx="1"/><path d="M8 6.5 V4 C8 1 14 1 14 4 V5.5"/></g><circle cx="5.7" cy="10.2" r="1" fill="#A8ABB0"/></svg>
</div>
</div><div id="frame"></div></body></html>
